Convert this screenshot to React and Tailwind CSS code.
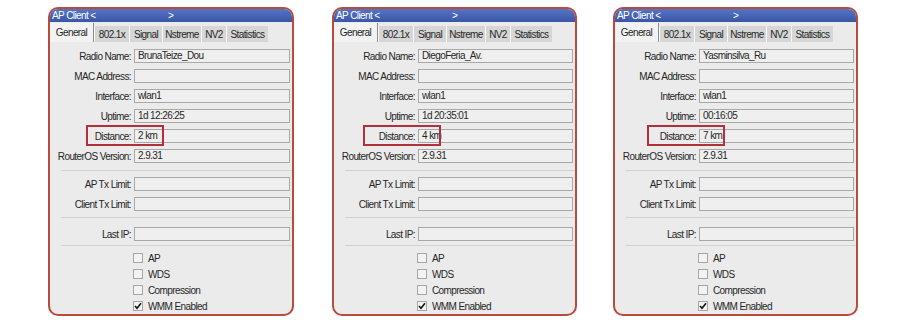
import React from "react";

const font = { fontFamily: '"Liberation Sans", Arial, sans-serif' };

const panels = [
  { name: "BrunaTeize_Dou", uptime: "1d 12:26:25", distance: "2 km", box: "left-[36px]", wrap: "ml-[48px] w-[246px]" },
  { name: "DiegoFeria_Av.", uptime: "1d 20:35:01", distance: "4 km", box: "left-[29px]", wrap: "ml-[38px] w-[245px]" },
  { name: "Yasminsilva_Ru", uptime: "00:16:05", distance: "7 km", box: "left-[32px]", wrap: "ml-[36px] w-[245px]" },
];

const tabs = [
  ["General", "w-[44px]"],
  ["802.1x", "w-[35px]"],
  ["Signal", "w-[33px]"],
  ["Nstreme", "w-[39px]"],
  ["NV2", "w-[25px]"],
  ["Statistics", "w-[42px]"],
];

function Field({ label, value, children }) {
  return (
    <div className="relative flex h-[20px] items-center">
      <div className="w-[81px] shrink-0 whitespace-nowrap text-right">{label}</div>
      <div className="ml-[3px] mr-[2px] h-[14px] flex-1 whitespace-nowrap border border-[#a8a8a8] bg-[#efefef] pl-[3px] leading-[12px]">
        {value}
      </div>
      {children}
    </div>
  );
}

function Sep({ className }) {
  return <div className={`ml-[11px] h-px bg-[#d2d2d2] ${className}`} />;
}

function Check({ label, checked }) {
  return (
    <div className="flex h-[16px] items-center pl-[83px]">
      <div className="flex h-[10px] w-[10px] items-center justify-center border border-[#a6a6a6] bg-[#f2f2f2]">
        {checked && (
          <svg width="8" height="8" viewBox="0 0 8 8">
            <path d="M1 4 L3 6.2 L7 1.2" stroke="#111" strokeWidth="1.6" fill="none" />
          </svg>
        )}
      </div>
      <span className="ml-[5px]">{label}</span>
    </div>
  );
}

function Panel({ p }) {
  return (
    <div className={`${p.wrap} flex h-[309px] shrink-0 flex-col overflow-hidden rounded-[10px] border-2 border-[#b94b3d] bg-[#ebebeb]`}>
      {/* title bar */}
      <div className="relative h-[13px] bg-gradient-to-b from-[#5474c4] to-[#3a57a6] pl-[2px] leading-[13px] text-white">
        AP Client &lt;
        <span className="absolute left-[118px] top-0">&gt;</span>
      </div>

      {/* tabs */}
      <div className="flex h-[20px] items-end bg-[#ebebeb]">
        {tabs.map(([t, w], i) =>
          i === 0 ? (
            <div key={t} className={`${w} flex h-[19px] items-center justify-center border-r border-[#8c8c8c] bg-[#f3f3f3]`}>
              {t}
            </div>
          ) : (
            <div key={t} className={`${w} flex h-[16px] items-center justify-center border-l border-[#fafafa] bg-[#d6d6d6]`}>
              {t}
            </div>
          )
        )}
      </div>

      {/* form */}
      <div className="pt-[4px]">
        <Field label="Radio Name:" value={p.name} />
        <Field label="MAC Address:" value="" />
        <Field label="Interface:" value="wlan1" />
        <Field label="Uptime:" value={p.uptime} />
        <Field label="Distance:" value={p.distance}>
          <div className={`absolute ${p.box} top-[-1px] h-[21px] w-[78px] border-2 border-[#b3303a]`} />
        </Field>
        <Field label="RouterOS Version:" value="2.9.31" />
        <Sep className="mt-[4px] mb-[3px]" />
        <Field label="AP Tx Limit:" value="" />
        <Field label="Client Tx Limit:" value="" />
        <Sep className="mt-[3px] mb-[6px]" />
        <Field label="Last IP:" value="" />
        <Sep className="mt-[1px] mb-[4px]" />
        <Check label="AP" />
        <Check label="WDS" />
        <Check label="Compression" />
        <Check label="WMM Enabled" checked />
      </div>
    </div>
  );
}

export default function App() {
  return (
    <div
      className="flex h-[333px] w-[907px] bg-white pt-[7px] text-[10px] tracking-[-0.6px] text-[#262626]"
      style={font}
    >
      {panels.map((p, i) => (
        <Panel key={i} p={p} />
      ))}
    </div>
  );
}
